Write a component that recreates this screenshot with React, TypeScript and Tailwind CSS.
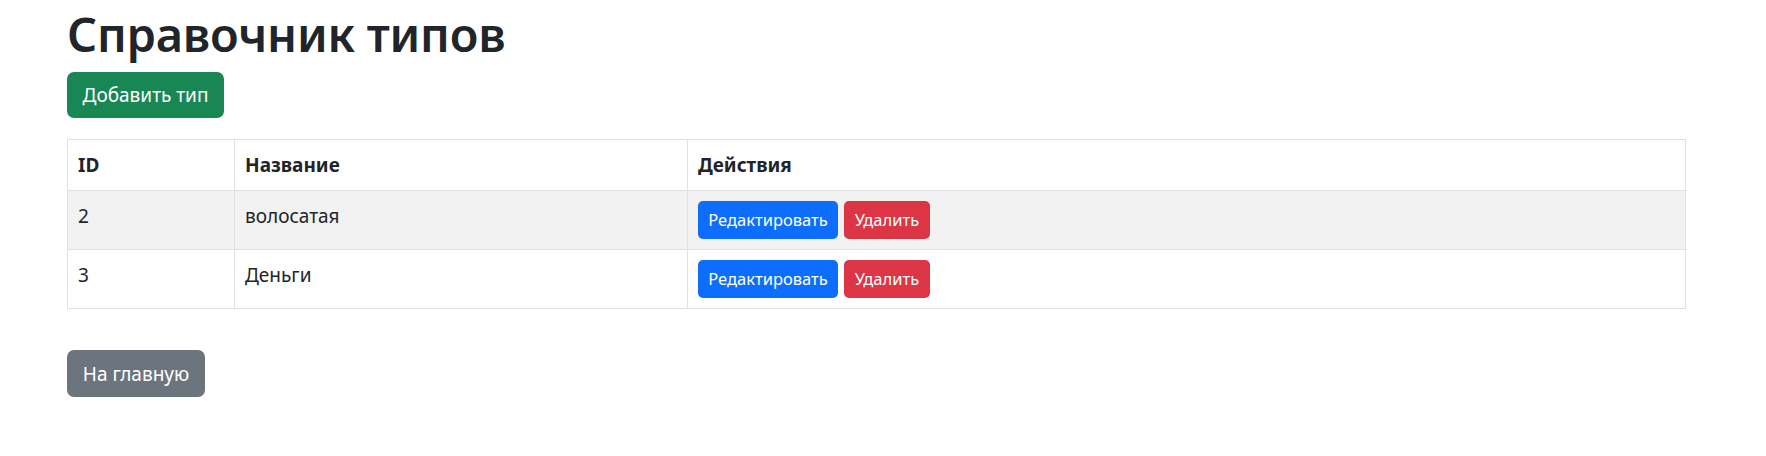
import React from "react";

const font = { fontFamily: '"Noto Sans", "Open Sans", sans-serif' };

const rows = [
  { id: 2, name: "волосатая", striped: true },
  { id: 3, name: "Деньги", striped: false },
];

export default function App() {
  return (
    <div className="min-h-[456px] bg-white text-[#212529] pl-[67px]" style={font}>
      <div className="flex flex-col items-start pt-[4px]">
        <h1 className="m-0 text-[47px] leading-[60px] font-semibold tracking-[-0.2px]">Справочник типов</h1>
        <button className="mt-[8px] h-[46px] w-[157px] rounded-[7px] bg-[#198754] text-[19px] leading-[30px] text-white flex items-center justify-center">
          Добавить тип
        </button>
      </div>

      <table className="mt-[21px] w-[1619px] border-collapse border border-[#dee2e6] text-[19px] leading-[30px]">
        <thead>
          <tr className="h-[51px]">
            <th className="w-[167px] border border-[#dee2e6] px-[10px] py-[10px] text-left align-top font-bold">ID</th>
            <th className="w-[453px] border border-[#dee2e6] px-[10px] py-[10px] text-left align-top font-bold">Название</th>
            <th className="border border-[#dee2e6] px-[10px] py-[10px] text-left align-top font-bold">Действия</th>
          </tr>
        </thead>
        <tbody>
          {rows.map((r) => (
            <tr key={r.id} className={r.striped ? "bg-[#f2f2f2]" : "bg-white"}>
              <td className="border border-[#dee2e6] px-[10px] pt-[10px] pb-[10px] align-top">{r.id}</td>
              <td className="border border-[#dee2e6] px-[10px] pt-[10px] pb-[10px] align-top">{r.name}</td>
              <td className="border border-[#dee2e6] px-[10px] pt-[10px] pb-[10px] align-top">
                <div className="flex gap-[6px]">
                  <button className="h-[38px] w-[140px] rounded-[5px] bg-[#0d6efd] text-[16.5px] leading-[26px] text-white flex items-center justify-center">
                    Редактировать
                  </button>
                  <button className="h-[38px] w-[86px] rounded-[5px] bg-[#dc3545] text-[16.5px] leading-[26px] text-white flex items-center justify-center">
                    Удалить
                  </button>
                </div>
              </td>
            </tr>
          ))}
        </tbody>
      </table>

      <button className="mt-[41px] h-[47px] w-[138px] rounded-[7px] bg-[#6c757d] text-[19px] leading-[30px] text-white flex items-center justify-center">
        На главную
      </button>
    </div>
  );
}
